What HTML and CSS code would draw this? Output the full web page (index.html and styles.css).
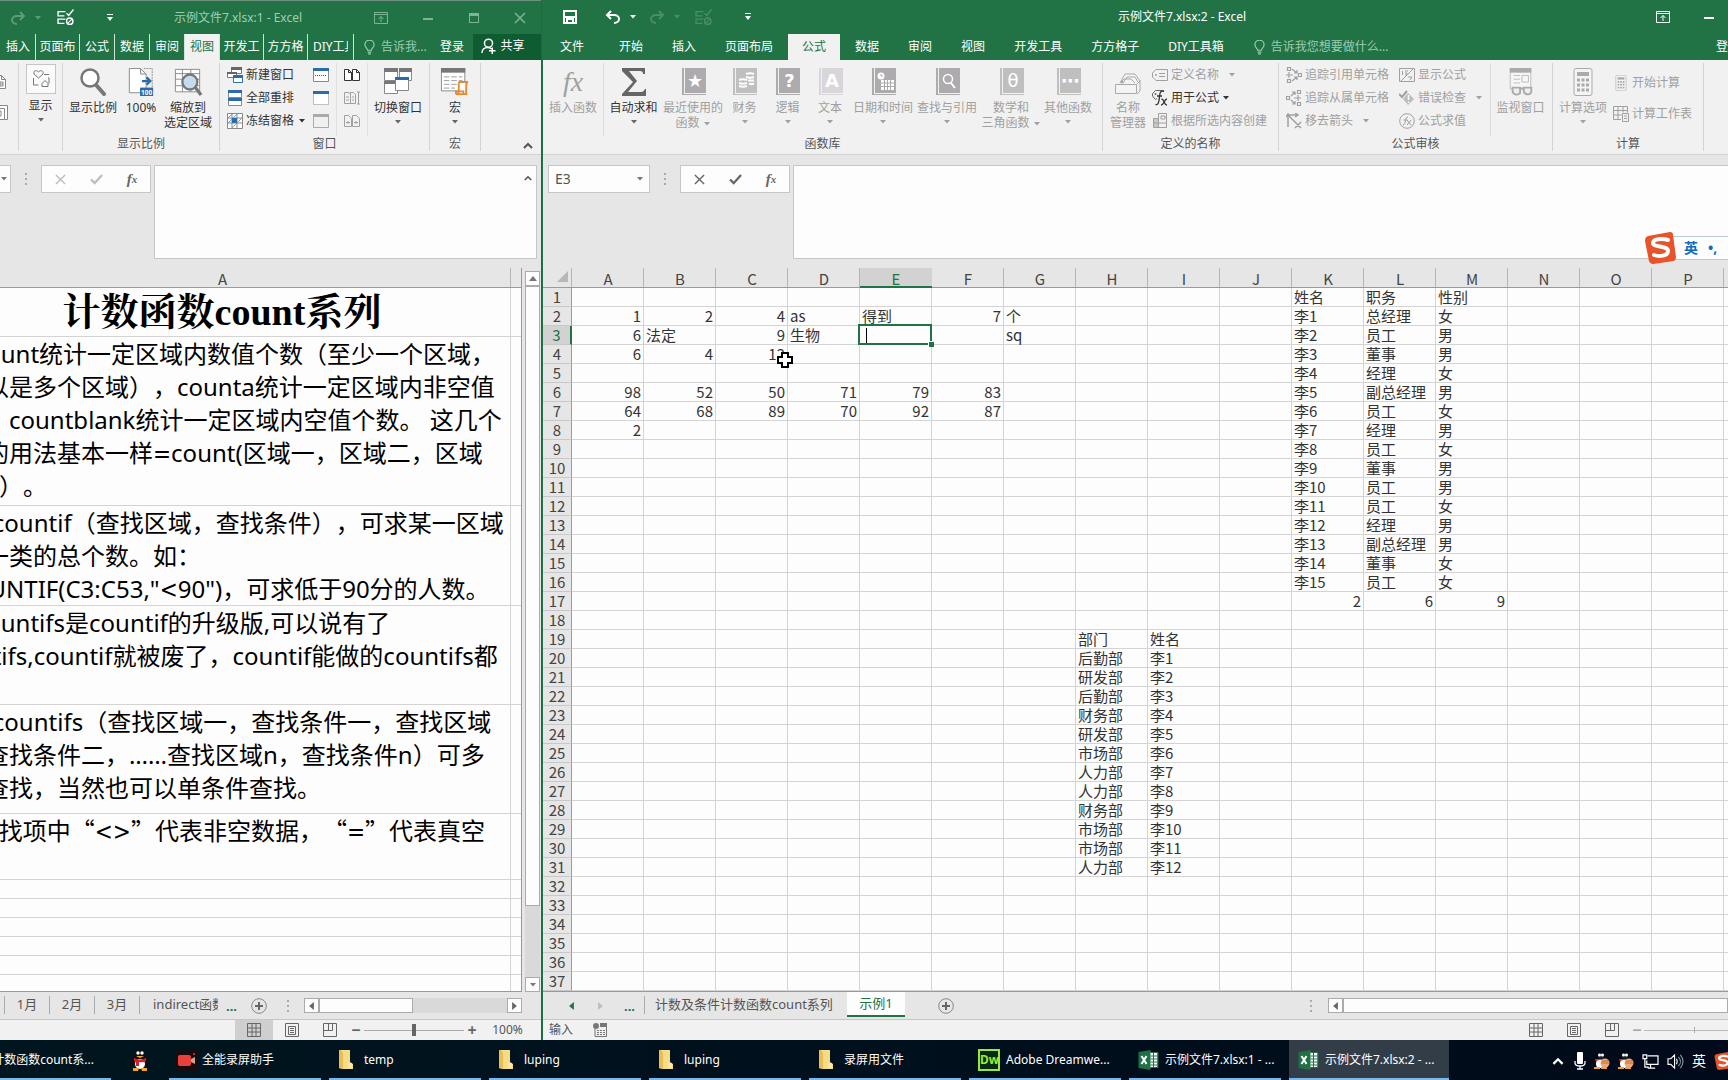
FILE: index.html
```html
<!DOCTYPE html>
<html lang="zh-CN">
<head>
<meta charset="utf-8">
<title>示例文件7.xlsx - Excel</title>
<link rel="stylesheet" href="styles.css">
</head>
<body>
<svg class="sprite" aria-hidden="true">
  <symbol id="save" viewBox="0 0 16 16"><path fill="none" stroke="currentColor" stroke-width="2" d="M2 2h12v12H2zM5 14v-4h6v4M2 8h12"/></symbol>
  <symbol id="undo" viewBox="0 0 16 16"><path fill="none" stroke="currentColor" stroke-width="2" d="M6 2 2 6l4 4M2 6h7c3 0 5 2 5 4s-2 4-5 4"/></symbol>
  <symbol id="redo" viewBox="0 0 16 16"><path fill="none" stroke="currentColor" stroke-width="2" d="m10 2 4 4-4 4M14 6H7c-3 0-5 2-5 4s2 4 5 4"/></symbol>
  <symbol id="list" viewBox="0 0 16 16"><path fill="none" stroke="currentColor" stroke-width="1.3" d="M8 2.500H1v4h6M9 4l2 2 4.500-5.500M8 9.500H1v4h6M1 11.500"/><circle cx="12" cy="11.500" r="3" fill="none" stroke="currentColor" stroke-width="1.300"/><path stroke="currentColor" d="m10 13.500 4-4"/></symbol>
  <symbol id="custom" viewBox="0 0 8 8"><path fill="currentColor" d="M1 0h6v1H1zM1 3h6L4 7z"/></symbol>
  <symbol id="down" viewBox="0 0 8 4"><path fill="currentColor" d="M1 0h6L4 3.500z"/></symbol>
  <symbol id="ribbonopt" viewBox="0 0 14 12"><path fill="none" stroke="currentColor" d="M.5.5h13v11H.5zM1 2.500h12M7 10V4.500M4.500 7 7 4.500 9.500 7"/></symbol>
  <symbol id="min" viewBox="0 0 12 12"><path fill="currentColor" d="M1 6h10v2H1z"/></symbol>
  <symbol id="max" viewBox="0 0 12 12"><path fill="currentColor" d="M1 1h10v10H1zM2 4v6h8V4z" fill-rule="evenodd"/></symbol>
  <symbol id="close" viewBox="0 0 12 12"><path stroke="currentColor" stroke-width="1.500" d="m1 1 10 10M11 1 1 11"/></symbol>
  <symbol id="bulb" viewBox="0 0 12 16"><path fill="none" stroke="currentColor" stroke-width="1.300" d="M4 11c0-2-3-3-3-6a5 5 0 0 1 10 0c0 3-3 4-3 6zM4 13h4M4.500 15h3"/></symbol>
  <symbol id="person" viewBox="0 0 16 18"><path fill="none" stroke="currentColor" stroke-width="1.600" d="M1 16c0-4 3-6 6-6 2 0 3 .5 4 1.500M12 10v7M8.500 13.500h7"/><circle cx="8" cy="5.500" r="4.300" fill="none" stroke="currentColor" stroke-width="1.600"/></symbol>
  <symbol id="up" viewBox="0 0 10 7"><path fill="none" stroke="currentColor" stroke-width="2" d="m1 6 4-4 4 4"/></symbol>
  <symbol id="page" viewBox="0 0 16 16"><path fill="#fff" stroke="#888" d="M2.500 1.500h7l4 4v9h-11zM9.500 1.500v4h4M5 8h6v4H5zM8 8v4M5 10h6"/></symbol>
  <symbol id="layout" viewBox="0 0 16 16"><path fill="#fff" stroke="#888" d="M.5 3.500h12v11H.5zM3.500.5h12v14h-3M4 6h5v5H4z"/></symbol>
  <symbol id="show" viewBox="0 0 20 20"><path fill="none" stroke="#777" d="M7.500 9 3 5c-1-4 3-4 4.500-2C9 1 13 1 12 5zM2.500 9v7h5M13 5.500h5M18 14.500V9h-1M11 17.500v-3l3-3 3 3v3z"/></symbol>
  <symbol id="lens" viewBox="0 0 28 28"><circle cx="11" cy="10" r="8.500" fill="#fff" stroke="#777" stroke-width="2.500"/><path stroke="#777" stroke-width="4" stroke-linecap="round" d="m18 18 7 8"/></symbol>
  <symbol id="hundred" viewBox="0 0 28 30"><path fill="#fff" stroke="#888" d="M1.500.5h12l6 6v20h-18zM13.500.5v6h6"/><path fill="none" stroke="#888" stroke-dasharray="2 1" d="M17 .5h9V21"/><path fill="none" stroke="#2b6ba8" stroke-width="2.500" d="M15 14h9M20 10l4 4-4 4"/><path fill="#2b6ba8" d="M13 21h14v9H13z"/><text x="14" y="28.500" font-size="7" font-weight="700" fill="#fff">100</text></symbol>
  <symbol id="zoomsel" viewBox="0 0 30 30"><path fill="#fff" stroke="#888" d="M1.500 1.500h26v24h-26zM1.500 6h26M1.500 12h26M1.500 19h26M9 1.500v24M18 1.500v24"/><circle cx="17" cy="15" r="8" fill="#c5dcf0" stroke="#777" stroke-width="2.500"/><path stroke="#777" stroke-width="3.500" d="m23 21 6 8"/></symbol>
  <symbol id="newwin" viewBox="0 0 16 16"><path fill="#fff" stroke="#777" d="M4.500 1.500h10v5h-10zM.5 5.500h9v5h-9z"/><path fill="#666" d="M4 0h11v3H4zM0 5h10v2H0z"/><path fill="#fff" stroke="#2b6ba8" d="M6.500 9.500h9v6h-9z"/><path fill="#2b6ba8" d="M6 8h10v3H6z"/></symbol>
  <symbol id="arrange" viewBox="0 0 16 16"><path fill="#fff" stroke="#888" d="M1.500 1.500h13v6h-13zM1.500 8.500h13v7h-13z"/><path fill="#2b6ba8" d="M1 0h14v3H1zM1 8h14v3H1z"/></symbol>
  <symbol id="freeze" viewBox="0 0 16 16"><path fill="#fff" stroke="#888" d="M.5.5h15v15H.5zM.5 5h15M.5 10h15M5 .5v15M10 .5v15"/><path stroke="#6fa4d3" d="m1 5 4-4M1 10l9-9M5 15l10-10"/><path fill="#2b6ba8" d="M5 5h5v5H5z"/></symbol>
  <symbol id="split" viewBox="0 0 16 14"><path fill="#fff" stroke="#888" d="M.5.5h15v13H.5z"/><path fill="#2b6ba8" d="M0 0h16v3H0z"/><path stroke="#555" stroke-dasharray="1 1" d="M2 7.500h12"/></symbol>
  <symbol id="hide" viewBox="0 0 16 14"><path fill="#fff" stroke="#888" stroke-dasharray="1 1" d="M.5.5h15v13H.5z"/><path fill="#2b6ba8" d="M0 0h16v3H0z"/></symbol>
  <symbol id="unhide" viewBox="0 0 16 14"><path fill="#f0f0f0" stroke="#aaa" d="M.5.5h15v13H.5z"/><path fill="#aaa" d="M0 0h16v3H0z"/></symbol>
  <symbol id="side" viewBox="0 0 16 14"><path fill="#fff" stroke="currentColor" d="M.5 1.500h4l3 3v8h-7zM4.500 1.500v3h3M8.500 1.500h4l3 3v8h-7zM12.500 1.500v3h3"/></symbol>
  <symbol id="sync" viewBox="0 0 16 14"><path fill="none" stroke="currentColor" d="M.5 1.500H5l1.500 2v9h-6zM6.500 1.500h3l2 2v9h-5zM2 6h3M2 9h3M8 6h2M8 9h2M14.500 1v12M13 1h3M13 13h3"/></symbol>
  <symbol id="reset" viewBox="0 0 16 14"><path fill="none" stroke="currentColor" d="M.5 1.500h4l3 3v8h-7zM8.500 1.500h4l3 3v8h-7zM2 8.500h4M10 8.500h4M4 7v3M12 7v3"/></symbol>
  <symbol id="switch" viewBox="0 0 30 28"><path fill="#fff" stroke="#888" d="M1.500 1.500h13v11h-13zM16.500 1.500h12v11h-12zM1.500 14.500h13v11h-13z"/><path fill="#777" d="M1 0h14v4H1zM16 0h13v4H16zM1 13h13v3H1z"/><path fill="#fff" stroke="#888" d="M12.500 9.500h13v13h-13z"/><path fill="#2b6ba8" d="M12 9h14v3H12z"/></symbol>
  <symbol id="macro" viewBox="0 0 32 30"><path fill="#fff" stroke="#888" d="M1.500.5h25v24h-25z"/><path fill="#777" d="M1 0h26v5H1z"/><path stroke="#999" stroke-dasharray="6 2" d="M4 9.500h20M4 13.500h20M4 17.500h14M4 21.500h12"/><path fill="#fff" stroke="#e28a35" stroke-width="2" d="M21 15h9c-2 0-2 2-2 4v9H17c2 0 3-1 3-3V18c0-2 0-3 1-3zM17 28v-3h8v3"/></symbol>
  <symbol id="sigma" viewBox="0 0 26 28"><path fill="#666" d="M1 0h23v6h-2c0-2-1-3-3-3H8l8 10-9 11h13c2 0 3-1 4-3h1v7H1v-2l11-12L1 3z"/></symbol>
  <symbol id="namemgr" viewBox="0 0 28 22"><path fill="#f4f4f4" stroke="#aaa" d="M6 10 11 1h10l5 7v10l-3 3M9 10l4-6h8l3 5M1.500 11.500h21v9h-21zM22.500 11.500l4-4M7 9l3-3h7l4 4"/><circle cx="8" cy="9" r="1.500" fill="#aaa"/></symbol>
  <symbol id="tag" viewBox="0 0 16 14"><path fill="none" stroke="currentColor" d="M4 1.500h11.500v11H4L.5 9V5zM7 5.500h6M7 8.500h6"/><circle cx="4" cy="7" r="1" fill="currentColor"/></symbol>
  <symbol id="tagfx" viewBox="0 0 16 16"><path fill="none" stroke="#666" d="M5 8.500 3.500 9.500.5 6V3.500l3-3H12"/><circle cx="3.500" cy="4" r="1" fill="#666"/><path fill="none" stroke="currentColor" stroke-width="1.300" d="M12 1.500c-5-2-4 4-5 9-.5 3-1.500 4.500-3.500 4M5 6h5M9.500 9c3 0 2 6 5.500 6M15 9c-2.500 0-3 6-6 6"/></symbol>
  <symbol id="grid2" viewBox="0 0 16 16"><path fill="none" stroke="currentColor" d="M6.500.5h8v14h-13v-9h5zM6.500 5v9M1.500 10h13M9 3h4v3H9z"/><path fill="currentColor" opacity=".5" d="M2 6h4v8H2z"/></symbol>
  <symbol id="trace1" viewBox="0 0 16 16"><path fill="none" stroke="currentColor" stroke-width="1.200" d="M1.500.5h3v3h-3zM1.500 12.500h3v3h-3zM12.500 6.500h3v3h-3zM0 8h7M3 5v6M6 2l5 4M11 3v3H8M6 14l5-4M11 13v-3H8"/></symbol>
  <symbol id="trace2" viewBox="0 0 16 16"><path fill="none" stroke="currentColor" stroke-width="1.200" d="M.5 6.500h3v3h-3zM11.500.5h3v3h-3zM11.500 12.500h3v3h-3zM8 8h7M12 5v6M5 6l4-4M6 2h3v3M5 10l4 4M9 11v3H6"/></symbol>
  <symbol id="trace3" viewBox="0 0 16 16"><path fill="none" stroke="currentColor" stroke-width="1.500" d="M2 2v12M0 4l2-3 2 3M2 2h10M9 0l3 2-3 2M4 4l7 7M9 9l6 6M15 9l-6 6"/></symbol>
  <symbol id="showf" viewBox="0 0 16 16"><path fill="none" stroke="currentColor" d="M.5 1.500h15v13H.5zM2 14 14 2M3.500 4v4M6 4h3M6 6h2v2H6M9 10h4l-2 3"/></symbol>
  <symbol id="err" viewBox="0 0 16 16"><path fill="currentColor" opacity=".65" d="m9 3 6 6-6 6-5-6z"/><path fill="none" stroke="currentColor" stroke-width="2" d="m0 4 3 3 5-6"/><path stroke="#fff" stroke-width="1.500" d="M9.500 5v5M9.500 11.500v1.500"/></symbol>
  <symbol id="fxc" viewBox="0 0 16 16"><circle cx="8" cy="8" r="7.300" fill="none" stroke="currentColor"/><path fill="none" stroke="currentColor" d="M9 4c-3-1-2 8-5 8M4.500 7h4M8 7l4 5M12 7l-4 5"/></symbol>
  <symbol id="watch" viewBox="0 0 28 30"><path fill="#f6f6f6" stroke="#bbb" d="M2.500.5h22v22h-22zM6 8h7M6 12h7M6 16h7M15 8h7v7h-7z"/><path fill="#aaa" d="M2 0h23v5H2z"/><path fill="#eee" stroke="#aaa" stroke-width="2" d="M5 21h8v6c-3 3-8 1-8-2zM17 21h8v5c-2 4-8 2-8-1zM13 22h4"/></symbol>
  <symbol id="calc" viewBox="0 0 20 28"><rect x="1" y=".5" width="18" height="27" rx="2" fill="#f4f4f4" stroke="#aaa"/><path fill="#aaa" d="M4 4h12v4H4z"/><path stroke="#aaa" stroke-width="3" stroke-dasharray="3 1.500" d="M4 12h12M4 17h12M4 22h12"/></symbol>
  <symbol id="calcsheet" viewBox="0 0 16 16"><path fill="none" stroke="currentColor" d="M.5.5h14v6M8 13.500H.5V.5M.5 4.500h14M.5 9h8M5 .5v13M10 .5v6M9.500 7.500h6v8h-6zM11 10h3M11 12.500h3"/></symbol>
  <symbol id="check" viewBox="0 0 14 12"><path fill="none" stroke="currentColor" stroke-width="2.500" d="m1 6 4 4 8-9"/></symbol>
  <symbol id="plus" viewBox="0 0 16 16"><circle cx="8" cy="8" r="7.300" fill="none" stroke="#888"/><path stroke="#666" stroke-width="2" d="M8 4v8M4 8h8"/></symbol>
  <symbol id="vnorm" viewBox="0 0 14 14"><path fill="none" stroke="#666" d="M.5.5h13v13H.5zM.5 5h13M.5 9h13M5 .5v13M9 .5v13"/></symbol>
  <symbol id="vpage" viewBox="0 0 14 14"><path fill="none" stroke="#666" d="M.5.5h13v13H.5zM3.500 3.500h7v8h-7zM5 5.500h4M5 7.500h4M5 9.500h4"/></symbol>
  <symbol id="vbreak" viewBox="0 0 14 14"><path fill="none" stroke="#666" d="M.5.5h13v13H.5zM5.500.5v7M9.500.5v7M.5 7.500h9"/></symbol>
  <symbol id="rec" viewBox="0 0 14 14"><path fill="none" stroke="#777" d="M2 5v8.500h11.500V4"/><circle cx="3" cy="3" r="3" fill="#777"/><path fill="#777" d="M7 0h7v4H7z"/><path stroke="#777" stroke-dasharray="2 1" d="M4 7.500h8M4 9.500h8M4 11.500h8"/></symbol>
  <symbol id="folder" viewBox="0 0 16 20"><path fill="#f8dc83" d="M1 0h11v12l3 2v5H5L1 18z"/><path fill="#e7bd55" d="M1 0h2l2 3v16l-4-1z"/><path fill="#fbe9ad" d="M10 13h4v5h-4z"/></symbol>
  <symbol id="xl" viewBox="0 0 20 20"><path fill="#fff" d="M11 2h8v16h-8z"/><path fill="#1e7145" d="M0 2 12 0v20L0 18z"/><path fill="none" stroke="#1e7145" d="M12 2.500h7.500v15H12M12 6h7M12 9h7M12 12h7M12 15h7M15 3v14"/><path stroke="#fff" stroke-width="2" d="m3 6 5 8M8 6l-5 8"/></symbol>
  <symbol id="qq" viewBox="0 0 20 22"><path fill="#111" d="M10 0c4 0 6 3 6 7 3 3 4 6 3 8l-3-1-1 4H5l-1-4-3 1c-1-2 0-5 3-8 0-4 2-7 6-7z"/><ellipse cx="10" cy="15" rx="5" ry="5" fill="#fff"/><circle cx="8" cy="4" r="1.700" fill="#fff"/><circle cx="12" cy="4" r="1.700" fill="#fff"/><path fill="#f5a623" d="M6 7h8l-4 2zM3 19h6l-1 3H3zM11 19h6v3h-5z"/><path fill="#d9202a" d="M4 9c4 2 8 2 12 0v3c-3 2-5 1-7 1v4H6v-4l-2-1z"/></symbol>
  <symbol id="qqs" viewBox="0 0 16 16"><circle cx="7" cy="3" r="3" fill="#222"/><circle cx="5.500" cy="2" r="1.500" fill="#fff"/><circle cx="8.500" cy="2" r="1.500" fill="#fff"/><path fill="#d9342a" d="M1 6h12l-2 6H3z"/><ellipse cx="6" cy="11" rx="4" ry="4" fill="#fff"/><circle cx="11" cy="10" r="4.500" fill="#f0a878"/><path stroke="#c86c3a" d="M7 10h8M8 8h6"/><path fill="#f3a32c" d="M0 14h6v2H0zM7 14h6v2H7z"/></symbol>
  <symbol id="recorder" viewBox="0 0 22 22"><rect width="22" height="22" rx="3" fill="#170d10"/><rect x="2" y="6" width="13" height="11" rx="2" fill="#e8413b"/><path fill="#d9a18c" d="m15 10 4-2v7l-4-2z"/><circle cx="18" cy="5" r="1" fill="#e8413b"/></symbol>
  <symbol id="mic" viewBox="0 0 12 18"><rect x="3" width="6" height="12" rx="1" fill="#fff"/><path fill="none" stroke="#fff" stroke-width="1.300" d="M1 9v2c0 4 10 4 10 0V9M6 14v3M3 17h6"/></symbol>
  <symbol id="monitor" viewBox="0 0 18 16"><path fill="none" stroke="#fff" stroke-width="1.300" d="M6 2h11v9H5V7M9 11v4M6 15h8M1 1h4v4H1zM3 5v9h4"/></symbol>
  <symbol id="speaker" viewBox="0 0 18 16"><path fill="none" stroke="#fff" stroke-width="1.200" d="M1 5h3l4-4v14l-4-4H1zM10 5c1 2 1 4 0 6"/><path fill="none" stroke="#8a95a0" stroke-width="1.200" d="M12 3c3 3 3 7 0 10M14 1c4 4 4 10 0 14"/></symbol>
  <symbol id="sogou" viewBox="0 0 32 32"><path fill="#e8532a" d="M4 4 26 0c2 0 3 1 3 3l3 22c0 2-1 3-2 4L9 32c-2 0-3-1-4-3L1 9c0-3 1-4 3-5z"/><path fill="none" stroke="#fff" stroke-width="4" stroke-linecap="round" d="M24 8c-6-2-15-1-15 3 0 5 15 2 15 8 0 5-9 6-14 4"/></symbol>
  <symbol id="left" viewBox="0 0 6 10"><path fill="currentColor" d="M6 0v10L0 5z"/></symbol>
  <symbol id="right" viewBox="0 0 6 10"><path fill="currentColor" d="M0 0v10l6-5z"/></symbol>
  <symbol id="tri" viewBox="0 0 8 5"><path fill="currentColor" d="M0 5h8L4 0z"/></symbol>
</svg>

<main class="desktop">
  <section class="window window-back" aria-label="示例文件7.xlsx:1">
    <header class="titlebar">
      <button class="tool t-redo dim" aria-label="恢复"><svg width="16" height="16"><use href="#redo"/></svg><svg width="8" height="4"><use href="#down"/></svg></button>
      <button class="tool" aria-label="清单"><svg width="17" height="17"><use href="#list"/></svg></button>
      <button class="tool t-custom" aria-label="自定义"><svg width="8" height="8"><use href="#custom"/></svg></button>
      <h1 class="title">示例文件7.xlsx:1 - Excel</h1>
      <div class="controls">
        <button class="tool" aria-label="功能区选项"><svg width="14" height="12"><use href="#ribbonopt"/></svg></button>
        <button class="tool" aria-label="最小化"><svg width="12" height="12"><use href="#min"/></svg></button>
        <button class="tool" aria-label="最大化"><svg width="12" height="12"><use href="#max"/></svg></button>
        <button class="tool" aria-label="关闭"><svg width="12" height="12"><use href="#close"/></svg></button>
      </div>
    </header>
    <nav class="tabs tabs-tight">
      <button class="tab">插入</button><button class="tab tab-wide">页面布</button><button class="tab">公式</button><button class="tab">数据</button><button class="tab">审阅</button><button class="tab active">视图</button><button class="tab tab-wide">开发工</button><button class="tab tab-wide">方方格</button><button class="tab tab-wide tab-cut"><span>DIY工具</span></button>
      <button class="tell"><svg width="11" height="15"><use href="#bulb"/></svg>告诉我...</button>
      <button class="login">登录</button>
      <button class="share"><svg width="15" height="17"><use href="#person"/></svg>共享</button>
    </nav>
    <div class="ribbon">
      <div class="group g-edge"><div class="edge-icons"><svg width="16" height="16"><use href="#page"/></svg><svg width="16" height="16"><use href="#layout"/></svg></div></div>
      <div class="group g-show"><button class="big"><span class="framed"><svg width="20" height="20"><use href="#show"/></svg></span><span>显示</span><svg class="arr" width="8" height="4"><use href="#down"/></svg></button></div>
      <div class="group g-zoom">
        <div class="row">
          <button class="big w60"><svg width="28" height="28"><use href="#lens"/></svg><span>显示比例</span></button>
          <button class="big w36"><svg width="28" height="30"><use href="#hundred"/></svg><span>100%</span></button>
          <button class="big w58"><svg width="30" height="30"><use href="#zoomsel"/></svg><span>缩放到<br>选定区域</span></button>
        </div>
        <span class="caption">显示比例</span>
      </div>
      <div class="group g-window">
        <div class="row">
          <div class="col c-first">
            <button class="small"><svg width="16" height="16"><use href="#newwin"/></svg>新建窗口</button>
            <button class="small"><svg width="16" height="16"><use href="#arrange"/></svg>全部重排</button>
            <button class="small"><svg width="16" height="16"><use href="#freeze"/></svg>冻结窗格<svg width="8" height="4"><use href="#down"/></svg></button>
          </div>
          <div class="col c-icons">
            <button class="small" aria-label="拆分"><svg width="16" height="14"><use href="#split"/></svg></button>
            <button class="small" aria-label="隐藏"><svg width="16" height="14"><use href="#hide"/></svg></button>
            <button class="small" aria-label="取消隐藏"><svg width="16" height="14"><use href="#unhide"/></svg></button>
          </div>
          <div class="col c-icons">
            <button class="small" aria-label="并排查看"><svg width="16" height="14"><use href="#side"/></svg></button>
            <button class="small off" aria-label="同步滚动"><svg width="16" height="14"><use href="#sync"/></svg></button>
            <button class="small off" aria-label="重设位置"><svg width="16" height="14"><use href="#reset"/></svg></button>
          </div>
          <button class="big w60"><svg width="30" height="28"><use href="#switch"/></svg><span>切换窗口</span><svg class="arr" width="8" height="4"><use href="#down"/></svg></button>
        </div>
        <span class="caption">窗口</span>
      </div>
      <div class="group g-macro"><button class="big"><svg width="32" height="30"><use href="#macro"/></svg><span>宏</span><svg class="arr" width="8" height="4"><use href="#down"/></svg></button><span class="caption">宏</span></div>
      <button class="collapse" aria-label="折叠功能区"><svg width="10" height="7"><use href="#up"/></svg></button>
    </div>
    <div class="formula">
      <button class="name-edge" aria-label="名称"><svg width="8" height="4"><use href="#down"/></svg></button>
      <span class="grip"></span>
      <div class="fbuttons"><button class="off" aria-label="取消"><svg width="11" height="11"><use href="#close"/></svg></button><button class="off" aria-label="输入"><svg width="13" height="11"><use href="#check"/></svg></button><button class="fx">f<sub>x</sub></button></div>
      <div class="fbox"><textarea aria-label="编辑栏"></textarea><button aria-label="折叠编辑栏"><svg width="8" height="6"><use href="#up"/></svg></button></div>
    </div>
    <div class="sheet-area">
      <div class="sheet notes-view">
        <table class="notes">
          <colgroup><col class="n-main"><col></colgroup>
          <thead><tr><th>A</th><th></th></tr></thead>
          <tbody>
            <tr class="n1"><td class="heading">计数函数count系列</td><td></td></tr>
            <tr class="n2"><td>1、count统计一定区域内数值个数（至少一个区域，<br>也可以是多个区域），counta统计一定区域内非空值<br>个数，countblank统计一定区域内空值个数。 这几个<br>函数的用法基本一样<span class="op">=</span>count(区域一，区域二，区域<br>三……）。</td><td></td></tr>
            <tr class="n3"><td>2、<span class="op">=</span>countif（查找区域，查找条件），可求某一区域<br>中某一类的总个数。如：<br><span class="op">=</span>COUNTIF(C3:C53,"<span class="op">&lt;</span>90")，可求低于90分的人数。</td><td></td></tr>
            <tr class="n3"><td>3、countifs是countif的升级版,可以说有了<br>countifs,countif就被废了，countif能做的countifs都</td><td></td></tr>
            <tr class="n5"><td>4、<span class="op">=</span>countifs（查找区域一，查找条件一，查找区域<br>二，查找条件二，……查找区域n，查找条件n）可多<br>条件查找，当然也可以单条件查找。</td><td></td></tr>
            <tr class="n6"><td>5、查找项中<q>&lt;&gt;</q>代表非空数据，<q>=</q>代表真空</td><td></td></tr>
            <tr><td></td><td></td></tr><tr><td></td><td></td></tr><tr><td></td><td></td></tr><tr><td></td><td></td></tr><tr><td></td><td></td></tr><tr><td></td><td></td></tr>
          </tbody>
        </table>
      </div>
      <div class="vscroll"><button aria-label="向上"><svg width="8" height="5"><use href="#tri"/></svg></button><div class="thumb"></div><div class="track"></div><button aria-label="向下"><svg width="8" height="4"><use href="#down"/></svg></button></div>
    </div>
    <div class="sheetbar">
      <button class="stab">1月</button><button class="stab">2月</button><button class="stab">3月</button><button class="stab stab-cut"><span>indirect函数</span></button>
      <button class="more">...</button>
      <button class="add" aria-label="新工作表"><svg width="16" height="16"><use href="#plus"/></svg></button>
      <span class="grip"></span>
      <div class="hscroll"><button aria-label="向左"><svg width="5" height="8"><use href="#left"/></svg></button><div class="thumb"></div><div class="track"></div><button aria-label="向右"><svg width="5" height="8"><use href="#right"/></svg></button></div>
    </div>
    <footer class="status">
      <div class="views"><button class="on" aria-label="普通"><svg width="14" height="14"><use href="#vnorm"/></svg></button><button aria-label="页面布局"><svg width="14" height="14"><use href="#vpage"/></svg></button><button aria-label="分页预览"><svg width="14" height="14"><use href="#vbreak"/></svg></button></div>
      <div class="zoom"><button>−</button><input type="range" aria-label="缩放" min="0" max="100" value="50"><button>+</button></div>
      <span class="percent">100%</span>
    </footer>
  </section>

  <section class="window window-front" aria-label="示例文件7.xlsx:2">
    <header class="titlebar">
      <div class="quick">
        <button class="tool" aria-label="保存"><svg width="16" height="16"><use href="#save"/></svg></button>
        <button class="tool" aria-label="撤消"><svg width="16" height="16"><use href="#undo"/></svg><svg width="8" height="4"><use href="#down"/></svg></button>
        <button class="tool dim" aria-label="恢复"><svg width="16" height="16"><use href="#redo"/></svg><svg width="8" height="4"><use href="#down"/></svg></button>
        <button class="tool dim" aria-label="清单"><svg width="17" height="17"><use href="#list"/></svg></button>
        <button class="tool t-custom" aria-label="自定义"><svg width="8" height="8"><use href="#custom"/></svg></button>
      </div>
      <h1 class="title">示例文件7.xlsx:2 - Excel</h1>
      <div class="controls"><button class="tool" aria-label="功能区选项"><svg width="14" height="12"><use href="#ribbonopt"/></svg></button><button class="tool" aria-label="最小化"><svg width="12" height="12"><use href="#min"/></svg></button></div>
    </header>
    <nav class="tabs tabs-full">
      <button class="tab">文件</button><button class="tab">开始</button><button class="tab">插入</button><button class="tab">页面布局</button><button class="tab active">公式</button><button class="tab">数据</button><button class="tab">审阅</button><button class="tab">视图</button><button class="tab">开发工具</button><button class="tab">方方格子</button><button class="tab">DIY工具箱</button>
      <button class="tell"><svg width="11" height="15"><use href="#bulb"/></svg>告诉我您想要做什么...</button>
      <button class="login">登录</button>
    </nav>
    <div class="ribbon">
      <div class="group g-lib">
        <div class="row">
          <button class="big w60 off"><i class="bigfx">fx</i><span>插入函数</span></button>
          <button class="big w60 cut"><svg width="26" height="28"><use href="#sigma"/></svg><span>自动求和</span><svg class="arr" width="8" height="4"><use href="#down"/></svg></button>
          <button class="big w60 off"><span class="book">★</span><span>最近使用的<br>函数<svg class="inl" width="8" height="4"><use href="#down"/></svg></span></button>
          <button class="big w43 off"><span class="book pale"><svg width="17" height="17" viewBox="0 0 17 17"><path fill="none" stroke="#fff" stroke-width="2" d="M8 2c3-1 5-1 8 0M8 5c3 1 5 1 8 0M10 8.500h6M1 8c3-1 5-1 8 0M1 11c3 1 5 1 8 0M1 14c3 1 5 1 8 0M11 11.500c2 1 3 1 5 0"/></svg></span><span>财务</span><svg class="arr" width="8" height="4"><use href="#down"/></svg></button>
          <button class="big w43 off"><span class="book">?</span><span>逻辑</span><svg class="arr" width="8" height="4"><use href="#down"/></svg></button>
          <button class="big w42 off"><span class="book faint">A</span><span>文本</span><svg class="arr" width="8" height="4"><use href="#down"/></svg></button>
          <button class="big w64 off"><span class="book"><svg width="17" height="18" viewBox="0 0 17 18"><circle cx="4" cy="4" r="3.500" fill="#fff"/><path fill="#fff" d="M4 8h13v10H4z"/><path fill="none" stroke="#aaa" d="M4 2v2h2M4 11h13M4 14.500h13M7.500 8v10M10.500 8v10M13.500 8v10"/></svg></span><span>日期和时间</span><svg class="arr" width="8" height="4"><use href="#down"/></svg></button>
          <button class="big w64 off"><span class="book"><svg width="16" height="16" viewBox="0 0 16 16"><circle cx="7" cy="6" r="4.500" fill="none" stroke="#fff" stroke-width="1.500"/><path stroke="#fff" stroke-width="2" d="m10 10 4 5"/></svg></span><span>查找与引用</span><svg class="arr" width="8" height="4"><use href="#down"/></svg></button>
          <button class="big w64 off"><span class="book pale thin">θ</span><span>数学和<br>三角函数<svg class="inl" width="8" height="4"><use href="#down"/></svg></span></button>
          <button class="big w50 off"><span class="book pale">⋯</span><span>其他函数</span><svg class="arr" width="8" height="4"><use href="#down"/></svg></button>
        </div>
        <span class="caption">函数库</span>
      </div>
      <div class="group g-names">
        <div class="row">
          <button class="big w42 off"><svg class="tall" width="28" height="28"><use href="#namemgr"/></svg><span>名称<br>管理器</span></button>
          <div class="col">
            <button class="small off"><svg width="16" height="14"><use href="#tag"/></svg>定义名称<svg class="far" width="8" height="4"><use href="#down"/></svg></button>
            <button class="small"><svg width="16" height="16"><use href="#tagfx"/></svg>用于公式<svg width="8" height="4"><use href="#down"/></svg></button>
            <button class="small off"><svg width="16" height="16"><use href="#grid2"/></svg>根据所选内容创建</button>
          </div>
        </div>
        <span class="caption">定义的名称</span>
      </div>
      <div class="group g-audit">
        <div class="row">
          <div class="col c-trace">
            <button class="small off"><svg width="16" height="16"><use href="#trace1"/></svg>追踪引用单元格</button>
            <button class="small off"><svg width="16" height="16"><use href="#trace2"/></svg>追踪从属单元格</button>
            <button class="small off"><svg width="16" height="16"><use href="#trace3"/></svg>移去箭头<svg class="far" width="8" height="4"><use href="#down"/></svg></button>
          </div>
          <div class="col c-check">
            <button class="small off"><svg width="16" height="16"><use href="#showf"/></svg>显示公式</button>
            <button class="small off"><svg width="16" height="16"><use href="#err"/></svg>错误检查<svg class="far" width="8" height="4"><use href="#down"/></svg></button>
            <button class="small off"><svg width="16" height="16"><use href="#fxc"/></svg>公式求值</button>
          </div>
          <button class="big w60 cut off"><svg width="28" height="30"><use href="#watch"/></svg><span>监视窗口</span></button>
        </div>
        <span class="caption">公式审核</span>
      </div>
      <div class="group g-calc">
        <div class="row">
          <button class="big w60 off"><svg width="20" height="28"><use href="#calc"/></svg><span>计算选项</span><svg class="arr" width="8" height="4"><use href="#down"/></svg></button>
          <div class="col c-two">
            <button class="small off"><svg width="16" height="16"><use href="#calc"/></svg>开始计算</button>
            <button class="small off"><svg width="16" height="16"><use href="#calcsheet"/></svg>计算工作表</button>
          </div>
        </div>
        <span class="caption">计算</span>
      </div>
    </div>
    <div class="formula">
      <div class="namebox"><input aria-label="名称框" value="E3"><button aria-label="名称列表"><svg width="8" height="4"><use href="#down"/></svg></button></div>
      <span class="grip"></span>
      <div class="fbuttons"><button aria-label="取消"><svg width="11" height="11"><use href="#close"/></svg></button><button aria-label="输入"><svg width="13" height="11"><use href="#check"/></svg></button><button class="fx">f<sub>x</sub></button></div>
      <div class="fbox"><textarea aria-label="编辑栏"></textarea></div>
    </div>
    <div class="sheet-area"><div class="sheet"><table class="grid" id="grid"></table></div></div>
    <div class="sheetbar">
      <button class="nav-arrow green" aria-label="上一张"><svg width="5" height="8"><use href="#left"/></svg></button>
      <button class="nav-arrow grey" aria-label="下一张"><svg width="5" height="8"><use href="#right"/></svg></button>
      <button class="more">...</button>
      <button class="stab stab-long">计数及条件计数函数count系列</button><button class="stab current">示例1</button>
      <button class="add" aria-label="新工作表"><svg width="16" height="16"><use href="#plus"/></svg></button>
      <span class="grip"></span>
      <div class="hscroll"><button aria-label="向左"><svg width="5" height="8"><use href="#left"/></svg></button><div class="thumb"></div></div>
    </div>
    <footer class="status">
      <span class="mode">输入</span><svg width="14" height="14"><use href="#rec"/></svg>
      <div class="views"><button aria-label="普通"><svg width="14" height="14"><use href="#vnorm"/></svg></button><button aria-label="页面布局"><svg width="14" height="14"><use href="#vpage"/></svg></button><button aria-label="分页预览"><svg width="14" height="14"><use href="#vbreak"/></svg></button></div>
      <div class="zoom muted"><button>−</button><span class="rail"></span></div>
    </footer>
  </section>
  <div class="ime"><svg width="32" height="32"><use href="#sogou"/></svg><b>英</b><b>•,</b></div>
  <svg class="pointer" width="16" height="16" viewBox="0 0 16 16"><path fill="#fff" stroke="#000" stroke-width="2" d="M5 1h6v4h4v6h-4v4H5v-4H1V5h4z"/></svg>
</main>

<nav class="taskbar">
  <button class="task task-edge"><span>计数函数count系...</span></button>
  <button class="pin" aria-label="QQ"><svg width="20" height="22"><use href="#qq"/></svg></button>
  <button class="task task-rec"><svg width="22" height="22"><use href="#recorder"/></svg><span>全能录屏助手</span></button>
  <button class="task"><svg width="16" height="20"><use href="#folder"/></svg><span class="sp">temp</span></button>
  <button class="task"><svg width="16" height="20"><use href="#folder"/></svg><span class="sp">luping</span></button>
  <button class="task"><svg width="16" height="20"><use href="#folder"/></svg><span class="sp">luping</span></button>
  <button class="task"><svg width="16" height="20"><use href="#folder"/></svg><span class="sp">录屏用文件</span></button>
  <button class="task"><span class="dw">Dw</span><span>Adobe Dreamwe...</span></button>
  <button class="task"><svg width="21" height="20"><use href="#xl"/></svg><span>示例文件7.xlsx:1 - ...</span></button>
  <button class="task task-on"><svg width="21" height="20"><use href="#xl"/></svg><span>示例文件7.xlsx:2 - ...</span></button>
  <div class="tray">
    <svg class="caret" width="12" height="8"><use href="#up"/></svg><svg width="12" height="18"><use href="#mic"/></svg><svg width="16" height="16"><use href="#qqs"/></svg><svg width="16" height="16"><use href="#qqs"/></svg><svg width="17" height="15"><use href="#monitor"/></svg><svg width="17" height="15"><use href="#speaker"/></svg><span>英</span><svg width="18" height="18"><use href="#sogou"/></svg>
  </div>
</nav>
<script src="script.js"></script>
</body>
</html>
```
FILE: styles.css
```css
* { box-sizing: border-box; }
body { margin: 0; height: 100vh; display: flex; flex-direction: column; overflow: hidden; font: 12px/16px "Noto Sans", "Noto Sans CJK SC", sans-serif; color: #333; background: #e6e6e6; }
button, input, textarea { font: inherit; color: inherit; background: none; border: 0; padding: 0; margin: 0; border-radius: 0; }
button { display: flex; align-items: center; justify-content: center; white-space: nowrap; flex: none; }
svg { flex: none; display: block; }
.sprite { position: absolute; width: 0; height: 0; }

.desktop { position: relative; flex: 1; min-height: 0; display: flex; }
.window { display: flex; flex-direction: column; min-width: 0; overflow: hidden; background: #e6e6e6; }
.window-back { flex: 0 0 542px; border-right: 1px solid #1b6a40; }
.window-front { flex: 1; border-left: 1px solid #217346; }

/* title bar */
.titlebar { height: 34px; flex: none; display: flex; align-items: center; background: #217346; color: #fff; }
.title { flex: 1; margin: 0; font-size: 12px; font-weight: 400; text-align: center; white-space: nowrap; }
.tool { gap: 8px; }
.dim { color: #5c9c79; }
.window-back .titlebar { border-top: 1px solid #6d8f7c; padding-left: 10px; }
.window-back .title { color: #a0ceb3; }
.window-back .t-redo { width: 47px; justify-content: flex-start; }
.window-back .t-custom { margin-left: 32px; }
.window-back .controls { display: flex; gap: 34px; padding-right: 15px; color: #7db593; }
.window-back .title { padding: 0 16px 0 4px; }
.quick { display: flex; align-items: center; gap: 12px; width: 217px; padding-left: 19px; }
.quick .tool:first-child { margin-right: 15px; }
.quick .dim + .dim { margin-left: 2px; }
.quick .t-custom { margin-left: 20px; }
.window-front .controls { display: flex; gap: 33px; width: 124px; padding-left: 52px; }
.window-front .dim { color: #4c8d69; }

/* ribbon tabs */
.tabs { height: 26px; flex: none; display: flex; align-items: stretch; background: #217346; color: #fff; overflow: hidden; }
.tab { height: 26px; padding-bottom: 1px; }
.tab.active { background: #f1f1f1; color: #217346; }
.tabs-full { padding-left: 3px; gap: 1px; }
.tabs-full .tab { padding: 0 14px 1px; }
.tabs-full .tab:first-child { margin-right: 6px; }
.tabs-tight { padding-left: 1px; }
.tabs-tight .tab { width: 35px; border-right: 1px solid #cfe3d7; }
.tabs-tight .tab-wide { width: 44px; }
.tabs-tight .tab-cut { width: 46px; padding: 0 5px 1px; justify-content: flex-start; }
.tab-cut span { overflow: hidden; width: 36px; }
.tell { gap: 6px; color: #9dcbb0; }
.tabs-tight .tell { margin-left: 10px; }
.tabs-full .tell { margin-left: 15px; }
.login { margin-left: auto; padding-bottom: 1px; }
.tabs-tight .share { width: 68px; margin-left: 9px; padding: 0 8px 2px 0; gap: 4px; background: #0f5c33; }
.tabs-full .login { margin-right: -12px; }

/* ribbon */
.ribbon { height: 95px; flex: none; display: flex; background: #f1f1f1; border-bottom: 1px solid #d2d2d2; overflow: hidden; }
.group { flex: none; height: 88px; margin-top: 3px; display: flex; flex-direction: column; align-items: stretch; border-right: 1px solid #d4d4d4; }
.row { display: flex; height: 73px; }
.caption { text-align: center; margin-top: auto; line-height: 14px; color: #555; white-space: nowrap; }
.big { flex-direction: column; justify-content: flex-start; height: 73px; padding-top: 5px; line-height: 15px; }
.big > svg:first-child, .book, .bigfx { height: 28px; margin-bottom: 4px; overflow: visible; }
.arr { margin-top: 5px; color: #666; }
.inl { display: inline-block; vertical-align: middle; margin-left: 3px; }
.off, .off .arr { color: #a0a0a0; }
.col { display: flex; flex-direction: column; }
.small { height: 23px; gap: 3px; justify-content: flex-start; }
.far { margin-left: 6px; }
.w36 { width: 36px; } .w42 { width: 42px; } .w43 { width: 43px; } .w50 { width: 50px; } .w58 { width: 58px; } .w60 { width: 60px; } .w64 { width: 64px; }
.cut { border-left: 1px solid #dcdcdc; }
.bigfx { font: italic 28px/28px "Liberation Serif", serif; }
.book { width: 25px; display: flex; align-items: center; justify-content: center; background: #adabae; border-left: 4px double #f1f1f1; border-bottom: 3px double #f1f1f1; color: #fff; font: 700 18px/22px "DejaVu Sans", sans-serif; }
.thin { font-weight: 400; }
.pale { background: #bfbfbf; }
.faint { background: #d8d6da; }
.g-edge { width: 19px; overflow: hidden; }
.edge-icons { display: flex; flex-direction: column; gap: 15px; margin: 11px 0 0 -8px; }
.g-show { width: 44px; }
.g-show .big { padding-top: 1px; }
.framed { width: 30px; height: 30px; margin-bottom: 4px; display: flex; align-items: center; justify-content: center; background: #fafafa; border: 1px solid #c6c6c6; }
.g-zoom { width: 157px; }
.g-window { width: 210px; }
.c-first { width: 86px; padding-left: 7px; }
.c-icons { width: 31px; padding-left: 7px; border-right: 1px solid #e0e0e0; }
.c-first svg:last-child:not(:first-child) { margin-left: 1px; }
.g-macro { width: 51px; }
.collapse { margin: auto 8px 5px auto; color: #555; }
.g-lib { width: 560px; }
.g-names { width: 176px; }
.g-names .row { padding-left: 4px; gap: 3px; }
.tall { padding-top: 4px; }
.g-audit { width: 274px; }
.c-trace { padding-left: 7px; width: 120px; }
.c-check { width: 91px; }
.g-calc { width: 151px; }
.c-two { padding-top: 8px; gap: 8px; }

/* formula bar */
.formula { height: 113px; flex: none; display: flex; align-items: flex-start; padding-top: 10px; }
.namebox { width: 102px; height: 28px; margin-left: 5px; display: flex; background: #fdfdfd; border: 1px solid #c6c6c6; }
.namebox input { flex: 1; min-width: 0; padding-left: 6px; font-size: 14px; color: #555; }
.namebox button { width: 18px; color: #777; }
.name-edge { width: 11px; height: 28px; justify-content: flex-start; background: #fdfdfd; border: 1px solid #c6c6c6; border-left: 0; color: #777; }
.grip { width: 2px; height: 12px; flex: none; background: repeating-linear-gradient(#aaa 0 2px, transparent 2px 5px); }
.formula .grip { margin: 8px 14px; }
.fbuttons { width: 110px; height: 28px; flex: none; display: flex; align-items: center; background: #fdfdfd; border: 1px solid #c6c6c6; color: #666; }
.fbuttons button { width: 36px; height: 26px; }
.fbuttons .off { color: #bdbdbd; }
.fx { font: italic 700 15px/20px "Liberation Serif", serif; }
.fx sub { font-size: 11px; line-height: 12px; }
.fbox { flex: 1; height: 94px; margin-left: 3px; display: flex; align-items: flex-start; background: #fdfdfd; border: 1px solid #c6c6c6; }
.fbox textarea { flex: 1; min-width: 0; height: 92px; resize: none; }
.fbox button { width: 16px; height: 24px; color: #555; }
.window-front .fbox { border-right: 0; }
.window-back .fbox { margin-right: 4px; }

/* sheets */
.sheet-area { flex: 1; min-height: 0; display: flex; }
.sheet { flex: 1; min-width: 0; overflow: hidden; border-bottom: 1px solid #999; }
table { border-collapse: separate; border-spacing: 0; table-layout: fixed; }
thead th { height: 20px; padding: 3px 0 0; font: 400 15px/16px "Noto Sans CJK SC", sans-serif; color: #444; background: linear-gradient(90deg, transparent 0 calc(100% - 1px), #b5b5b5 0) #e6e6e6; border-bottom: 1px solid #9b9b9b; }
td { height: 19px; padding: 0 2px; background: #fdfdfd; border-right: 1px solid #d4d4d4; border-bottom: 1px solid #d4d4d4; white-space: nowrap; }
.grid { width: 1253px; font: 15px/18px "Noto Sans CJK SC", sans-serif; color: #333; }
.grid td { line-height: 18px; }
.grid .num { text-align: right; }
.c-head { width: 29px; }
.grid tbody th { height: 19px; padding: 0; font-weight: 400; line-height: 18px; color: #444; background: #e6e6e6; border-right: 1px solid #9b9b9b; border-bottom: 1px solid #c8c8c8; }
.grid thead th:first-child { padding: 1px 3px 3px 14px; }
.corner { color: #b7b7b7; }
.grid thead .sel { background: #d2d2d2; color: #217346; border-bottom: 2px solid #217346; line-height: 15px; }
.grid tbody th.sel { background: #d2d2d2; color: #217346; border-right: 2px solid #217346; }
.cell-edit { position: relative; }
.cell-edit::before { content: ""; position: absolute; inset: -2px -1px -1px -2px; border: 2px solid #217346; }
.cell-edit::after { content: ""; position: absolute; right: -3px; bottom: -3px; width: 5px; height: 5px; background: #217346; border: solid #fff; border-width: 1px 0 0 1px; }
.caret-line { display: block; width: 1px; height: 15px; margin-left: 4px; background: #000; }
.notes-view { border-right: 1px solid #999; flex: 0 0 522px; }
.notes { width: 588px; margin-left: -66px; font: 24px/33px "Noto Sans", "Noto Sans CJK SC", sans-serif; color: #000; text-spacing-trim: space-all; }
.n-main { width: 577px; }
.notes td { vertical-align: top; padding: 0 3px; }
.notes tbody tr:nth-child(n+7) td { line-height: 18px; }
.n1 td { height: 49px; }
.notes .heading { text-align: center; font: 700 38px/48px "Liberation Serif", "Noto Serif CJK SC", "Noto Sans CJK SC", serif; }
.n2 td { height: 169px; }
.n3 td { height: 99px; }
.n5 td { height: 109px; }
.n6 td { height: 66px; }
.op { font-family: "DejaVu Sans Condensed", "Noto Sans", sans-serif; line-height: 24px; }
.notes q { quotes: none; font-family: "DejaVu Sans Condensed", "Noto Sans", sans-serif; line-height: 24px; }
.notes q::before { content: "“"; font-family: "Noto Sans CJK SC", sans-serif; }
.notes q::after { content: "”"; font-family: "Noto Sans CJK SC", sans-serif; }

/* scroll bars */
.vscroll { width: 15px; margin: 3px 0 0 3px; display: flex; flex-direction: column; color: #777; }
.vscroll button, .hscroll button { width: 15px; height: 15px; background: #fdfdfd; border: 1px solid #ababab; }
.vscroll .thumb { flex: 620 0 0; background: #fdfdfd; border: 1px solid #ababab; }
.vscroll .track { flex: 71 0 0; background: #d9d9d9; }
.hscroll { display: flex; height: 15px; color: #666; }
.hscroll .thumb { background: #fdfdfd; border: 1px solid #ababab; }
.hscroll .track { flex: 1; background: #d9d9d9; }

/* sheet tabs */
.sheetbar { height: 27px; flex: none; display: flex; align-items: center; font-size: 13px; color: #555; }
.stab { width: 45px; height: 18px; margin-bottom: 2px; padding-bottom: 2px; border-left: 1px solid #ababab; }
.window-back .stab:first-child { margin-left: 4px; }
.stab-cut { width: 79px; padding-left: 13px; justify-content: flex-start; }
.stab-cut span { width: 66px; overflow: hidden; }
.more { color: #217346; font-weight: 700; }
.window-back .more { margin-left: 8px; }
.window-back .add { margin: 0 20px 0 14px; }
.window-back .hscroll { width: 218px; margin-left: 15px; }
.window-back .hscroll .thumb { width: 94px; }
.nav-arrow { width: 29px; }
.green { color: #217346; }
.grey { color: #bdbdbd; }
.window-front .nav-arrow:first-child { margin-left: 14px; }
.window-front .more { width: 29px; }
.stab-long { width: 203px; padding-left: 10px; justify-content: flex-start; }
.current { width: 58px; height: 25px; align-self: flex-start; background: #fdfdfd; color: #217346; border-left: 0; border-bottom: 2px solid #217346; }
.window-front .add { margin-left: 33px; }
.window-front .sheetbar .grip { margin-left: auto; }
.window-front .hscroll { margin-left: 16px; flex: 0 0 400px; }
.window-front .hscroll .thumb { flex: 1; }

/* status bar */
.status { height: 21px; flex: none; display: flex; align-items: center; background: #f1f1f1; border-top: 1px solid #c6c6c6; color: #555; }
.views { display: flex; margin-left: auto; }
.views button { width: 38px; height: 20px; }
.views .on { background: #cfcfcf; }
.zoom { display: flex; align-items: center; font-size: 16px; font-weight: 700; color: #666; }
.zoom button { width: 12px; }
.zoom input { appearance: none; width: 100px; height: 12px; margin: 0 2px; background: linear-gradient(#aaa, #aaa) center / 100% 1px no-repeat; }
.zoom input::-webkit-slider-thumb { appearance: none; width: 4px; height: 12px; background: #666; }
.percent { width: 63px; padding-right: 4px; text-align: center; }
.window-back .zoom { margin-left: 1px; }
.mode { margin: 0 20px 0 6px; }
.muted { color: #aaa; }
.rail { width: 84px; height: 6px; margin-left: 1px; background: linear-gradient(#aaa, #aaa) 50px 0 / 1px 6px no-repeat, linear-gradient(#bbb, #bbb) center / 100% 1px no-repeat; }

/* floating layers */
.ime { position: absolute; right: 0; top: 236px; width: 80px; height: 24px; display: flex; align-items: center; gap: 8px; background: #fdfdfd; border: solid #b9cdd6; border-width: 1px 0; color: #0f6cbd; font-size: 14px; }
.ime svg { margin-left: -4px; }
.ime b:last-child { margin-left: 2px; }
.pointer { position: absolute; left: 777px; top: 352px; }

/* taskbar */
.taskbar { height: 40px; flex: none; display: flex; background: linear-gradient(90deg, #00161f, #000a1a); color: #fff; overflow: hidden; }
.task { width: 152px; margin-right: 8px; height: 40px; justify-content: flex-start; gap: 6px; padding: 2px 0 0 9px; border-bottom: 2px solid #76b9ed; overflow: hidden; }
.task-edge { width: 111px; margin: 0; padding: 2px 17px 0 0; justify-content: flex-end; }
.task-rec { gap: 4px; padding-left: 7px; }
.pin { width: 58px; }
.sp { margin-left: 4px; }
.task-on { width: 160px; background: #333d48; }
.dw { width: 22px; height: 22px; border: 2px solid #9be83b; background: #072b12; color: #9be83b; font-weight: 700; line-height: 18px; text-align: center; }
.tray { margin: 2px -4px 0 auto; display: flex; align-items: center; gap: 8px; }
.tray .caret { margin-right: 2px; }
.tray span { font-size: 14px; }
```
FILE: script.js
```js
const columns = 'ABCDEFGHIJKLMNOPQ'.split('');
const cells = {
  A2: 1, B2: 2, C2: 4, D2: 'as', E2: '得到', F2: 7, G2: '个',
  A3: 6, B3: '法定', C3: 9, D3: '生物', G3: 'sq',
  A4: 6, B4: 4, C4: 12,
  A6: 98, B6: 52, C6: 50, D6: 71, E6: 79, F6: 83,
  A7: 64, B7: 68, C7: 89, D7: 70, E7: 92, F7: 87,
  A8: 2, K1: '姓名', L1: '职务', M1: '性别', K17: 2, L17: 6, M17: 9,
  H19: '部门', I19: '姓名'
};
const jobs = ['总经理', '员工', '董事', '经理', '副总经理', '员工', '经理', '员工', '董事', '员工', '员工', '经理', '副总经理', '董事', '员工'];
const sexes = '女男男女男女男女男男女男男女女';
jobs.forEach((job, i) => {
  cells['K' + (i + 2)] = '李' + (i + 1);
  cells['L' + (i + 2)] = job;
  cells['M' + (i + 2)] = sexes[i];
});
const departments = ['后勤', '研发', '后勤', '财务', '研发', '市场', '人力', '人力', '财务', '市场', '市场', '人力'];
departments.forEach((name, i) => {
  cells['H' + (i + 20)] = name + '部';
  cells['I' + (i + 20)] = '李' + (i + 1);
});

let html = '<colgroup><col class="c-head">' + '<col>'.repeat(columns.length) + '</colgroup><thead><tr>' +
  '<th><svg class="corner" width="11" height="11"><path fill="currentColor" d="M11 0v11H0z"/></svg></th>' +
  columns.map(c => `<th${c === 'E' ? ' class="sel"' : ''}>${c}</th>`).join('') + '</tr></thead><tbody>';
for (let row = 1; row <= 37; row++) {
  html += `<tr><th${row === 3 ? ' class="sel"' : ''}>${row}</th>`;
  for (const column of columns) {
    const value = cells[column + row];
    if (column + row === 'E3') html += '<td class="cell-edit"><span class="caret-line"></span></td>';
    else if (typeof value === 'number') html += `<td class="num">${value}</td>`;
    else html += `<td>${value || ''}</td>`;
  }
  html += '</tr>';
}
document.getElementById('grid').innerHTML = html + '</tbody>';
```
